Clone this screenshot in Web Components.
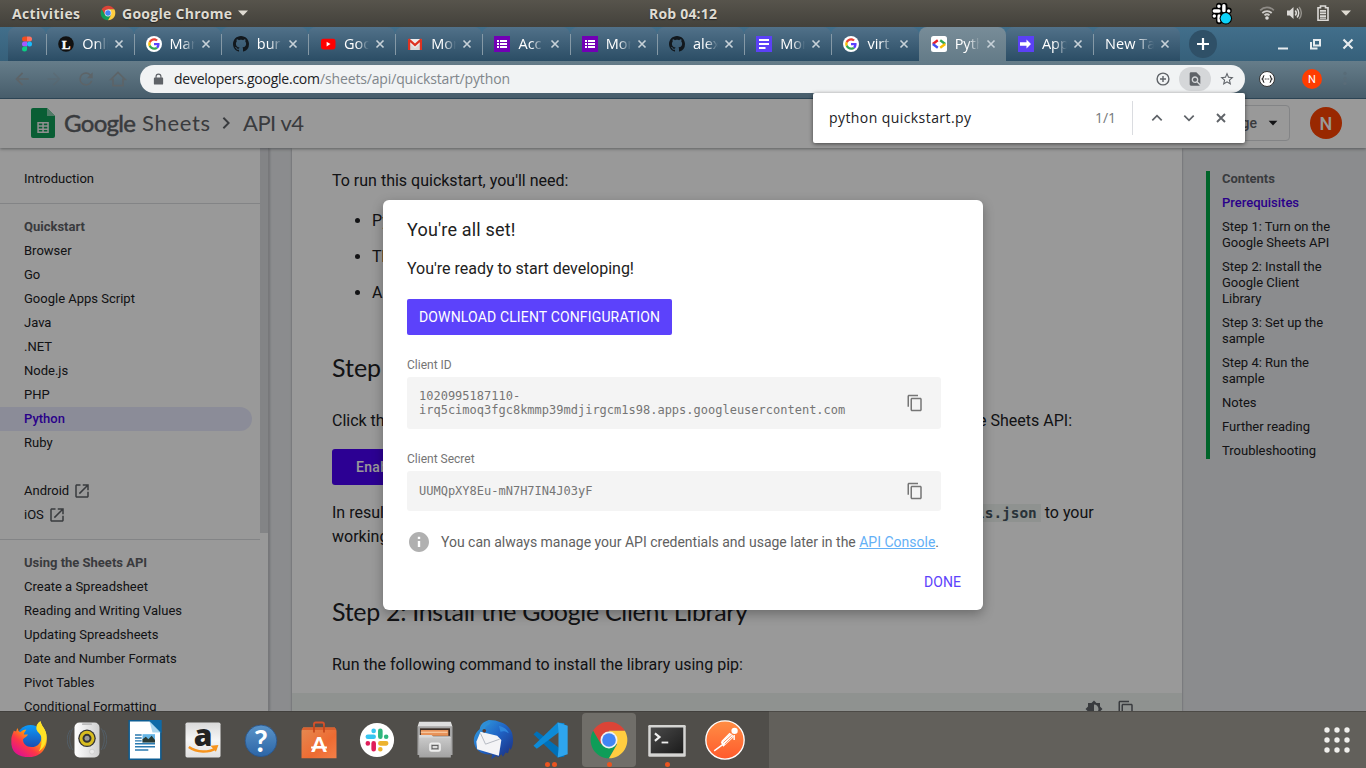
<!DOCTYPE html>
<html lang="en">
<head>
<meta charset="utf-8">
<title>Python Quickstart | Sheets API | Google Developers</title>
<style>
html,body{margin:0;height:100%;overflow:hidden}
body{width:1366px;height:768px;font-family:Roboto,sans-serif;background:#999}
</style>
</head>
<body>
<desk-top></desk-top>
<script>
const CHROME = '<path fill="#db4437" d="M4.95 13A22 22 0 0 1 43.05 13L24 13 14.47 29.5z"/><path fill="#0f9d58" d="M4.95 13L14.47 29.5 33.53 29.5 24 46A22 22 0 0 1 4.95 13z"/><path fill="#ffcd40" d="M43.05 13H24l9.53 16.5L24 46A22 22 0 0 0 43.05 13z"/><circle cx="24" cy="24" r="10.2" fill="#f1f1f1"/><circle cx="24" cy="24" r="8.2" fill="#4285f4"/>';
const FORMS = '<path fill="#7200b5" d="M0 0h16v16H0z"/><path fill="#fff" d="M3 4h2v2H3zM6 4h7v2H6zM3 7h2v2H3zM6 7h7v2H6zM3 10h2v2H3zM6 10h7v2H6z"/>';
const COPY = '<path fill="currentColor" d="M16 1H4c-1.1 0-2 .9-2 2v14h2V3h12V1zm3 4H8c-1.1 0-2 .9-2 2v14c0 1.1.9 2 2 2h11c1.1 0 2-.9 2-2V7c0-1.1-.9-2-2-2zm0 16H8V7h11v14z"/>';
const ICONS = {
  chrome: [48, CHROME],
  figma: [16, '<path fill="#f24e1e" d="M5.5 .5H8v5H5.5a2.5 2.5 0 0 1 0-5z"/><path fill="#ff7262" d="M8 .5h2.5a2.5 2.5 0 0 1 0 5H8z"/><path fill="#a259ff" d="M5.5 5.5H8v5H5.5a2.5 2.5 0 0 1 0-5z"/><circle cx="10.5" cy="8" r="2.5" fill="#1abcfe"/><path fill="#0acf83" d="M5.5 10.5H8V13a2.5 2.5 0 1 1-2.5-2.5z"/>'],
  ell: [16, '<circle cx="8" cy="8" r="7.8" fill="#111"/><text x="8" y="12.6" text-anchor="middle" font-family="Liberation Serif" font-weight="700" font-size="13" fill="#fff" stroke="#fff" stroke-width=".4">L</text>'],
  google: [16, '<circle cx="8" cy="8" r="8" fill="#fff"/><g transform="translate(2.2 2.2) scale(.242)"><path fill="#ea4335" d="M24 9.5c3.54 0 6.71 1.22 9.21 3.6l6.85-6.85C35.9 2.38 30.47 0 24 0 14.62 0 6.51 5.38 2.56 13.22l7.98 6.19C12.43 13.72 17.74 9.5 24 9.5z"/><path fill="#5b41ff" d="M46.98 24.55c0-1.57-.15-3.09-.38-4.55H24v9.02h12.94c-.58 2.96-2.26 5.48-4.78 7.18l7.73 6c4.51-4.18 7.09-10.36 7.09-17.65z"/><path fill="#fbbc05" d="M10.53 28.59c-.48-1.45-.76-2.99-.76-4.59s.27-3.14.76-4.59l-7.98-6.19C.92 16.46 0 20.12 0 24c0 3.88.92 7.54 2.56 10.78l7.97-6.19z"/><path fill="#34a853" d="M24 48c6.48 0 11.93-2.13 15.89-5.81l-7.73-6c-2.15 1.45-4.92 2.3-8.16 2.3-6.26 0-11.57-4.22-13.47-9.91l-7.98 6.19C6.51 42.62 14.62 48 24 48z"/></g>'],
  github: [16, '<path fill="#12181d" d="M8 0C3.58 0 0 3.58 0 8c0 3.54 2.29 6.53 5.47 7.59.4.07.55-.17.55-.38 0-.19-.01-.82-.01-1.49-2.01.37-2.53-.49-2.69-.94-.09-.23-.48-.94-.82-1.13-.28-.15-.68-.52-.01-.53.63-.01 1.08.58 1.23.82.72 1.21 1.87.87 2.33.66.07-.52.28-.87.51-1.07-1.78-.2-3.64-.89-3.64-3.95 0-.87.31-1.59.82-2.15-.08-.2-.36-1.02.08-2.12 0 0 .67-.21 2.2.82.64-.18 1.32-.27 2-.27.68 0 1.36.09 2 .27 1.53-1.04 2.2-.82 2.2-.82.44 1.1.16 1.92.08 2.12.51.56.82 1.27.82 2.15 0 3.07-1.87 3.75-3.65 3.95.29.25.54.73.54 1.48 0 1.07-.01 1.93-.01 2.2 0 .21.15.46.55.38A8.013 8.013 0 0 0 16 8c0-4.42-3.58-8-8-8z"/>'],
  youtube: [16, '<rect x="1" y="2.7" width="14.5" height="10.8" rx="2.4" fill="#f00"/><path fill="#fff" d="M6.6 5.8v4.6L10.5 8.1z"/>'],
  gmail: [16, '<path fill="#eee" d="M1 3h14v11H1z"/><path fill="#d8d8d8" d="M3 8l5 4 5-4v6H3z"/><path fill="#dd3322" d="M1 14V3.2L2.4 2.6 8 7.6l5.6-5L15 3.2V14h-2.2V6.3L8 10.4 3.2 6.3V14z"/>'],
  forms: [16, FORMS],
  docs: [16, '<path fill="#5b41f6" d="M0 0h16v16H0z"/><path fill="#fff" d="M3 3h10v2H3zM3 7h10v2H3zM3 11h6.5v2H3z"/>'],
  devs: [16, '<rect width="16" height="16" rx="2.5" fill="#fff"/><g fill="none" stroke-width="2.4"><path stroke="#e8202a" d="M6.8 4.3L1.8 8"/><path stroke="#4450f0" d="M1.8 8L6.8 11.7"/><path stroke="#34a853" d="M9.2 4.3L14.2 8"/><path stroke="#fbbc05" d="M14.2 8L9.2 11.7"/></g>'],
  apps: [16, '<path fill="#5b41f6" d="M0 0h16v16H0z"/><path fill="#fff" d="M2 6.3h6.5V3.5L13 8l-4.500 4.500V9.700H2z"/>'],
  close: [16, '<path d="M4 4l8 8M12 4l-8 8" stroke="currentColor" stroke-width="1.9" fill="none"/>'],
  back: [24, '<path fill="currentColor" d="M20 11H7.83l5.59-5.59L12 4l-8 8 8 8 1.41-1.41L7.83 13H20v-2z"/>'],
  forward: [24, '<path fill="currentColor" d="M12 4l-1.41 1.41L16.17 11H4v2h12.17l-5.58 5.59L12 20l8-8z"/>'],
  reload: [24, '<path fill="currentColor" d="M17.65 6.35A7.958 7.958 0 0 0 12 4a8 8 0 1 0 7.73 10h-2.08A6 6 0 1 1 12 6c1.66 0 3.14.69 4.22 1.78L13 11h7V4l-2.35 2.35z"/>'],
  home: [24, '<path fill="none" stroke="currentColor" stroke-width="2" d="M3.5 12.5L12 4l8.5 8.5H18V20H6v-7.5z"/>'],
  lock: [16, '<path fill="#5f6368" fill-rule="evenodd" d="M12.5 5.5h-.8V4.3a3.7 3.7 0 0 0-7.4 0v1.2h-.8A1.2 1.2 0 0 0 2.3 6.7v6.5c0 .6.5 1.1 1.2 1.1h9c.7 0 1.2-.5 1.2-1.1V6.700c0-.7-.5-1.200-1.200-1.200zM5.700 4.300a2.300 2.300 0 0 1 4.600 0v1.200H5.700z"/>'],
  plusc: [16, '<circle cx="8" cy="8" r="5.9" fill="none" stroke="#5f6368" stroke-width="1.4"/><path d="M8 5v6M5 8h6" stroke="#5f6368" stroke-width="1.4"/>'],
  findpage: [24, '<path fill="#5f6368" d="M20 19.59V8l-6-6H6c-1.1 0-1.99.9-1.99 2L4 20c0 1.1.89 2 1.99 2H18c.45 0 .85-.15 1.19-.4l-4.43-4.43c-.8.52-1.74.83-2.76.83-2.76 0-5-2.24-5-5s2.24-5 5-5 5 2.24 5 5c0 1.02-.31 1.96-.83 2.75L20 19.59zM9 13c0 1.66 1.34 3 3 3s3-1.34 3-3-1.34-3-3-3-3 1.34-3 3z"/>'],
  star: [24, '<path fill="#5f6368" d="M22 9.24l-7.19-.62L12 2 9.19 8.63 2 9.24l5.46 4.73L5.82 21 12 17.27 18.18 21l-1.63-7.03L22 9.24zM12 15.4l-3.76 2.27 1-4.28-3.32-2.88 4.38-.38L12 6.1l1.71 4.04 4.38.38-3.32 2.88 1 4.28L12 15.4z"/>'],
  braces: [16, '<circle cx="8" cy="8" r="7.5" fill="#fff" stroke="#333" stroke-width="1"/><path fill="none" stroke="#222" stroke-width="1.2" d="M5.3 4.5c-1.3 0-.8 3-2 3.5 1.2.5.7 3.5 2 3.5M10.7 4.5c1.3 0 .8 3 2 3.5-1.2.5-.7 3.5-2 3.5"/><path d="M5.8 7.500h1v1h-1zM7.500 7.500h1v1h-1zM9.200 7.500h1v1h-1z" fill="#222"/>'],
  up: [16, '<path d="M3.300 10.300L8 5.600l4.700 4.700" stroke="#5f6368" stroke-width="1.7" fill="none"/>'],
  down: [16, '<path d="M3.300 5.700L8 10.400l4.700-4.700" stroke="#5f6368" stroke-width="1.7" fill="none"/>'],
  min: [16, '<path d="M3 11.500h10v2H3z" fill="#e7ecef"/>'],
  restore: [16, '<path fill="none" stroke="#e7ecef" stroke-width="2" d="M7 4h6v5.500H7zM4 6v6.500h6.500"/>'],
  tray: [24, '<g stroke="#000" stroke-width="6.4" stroke-linecap="round"><path d="M9.500 4v5M15 4v5M5 9h14.500M5 14.500h4M9.500 15v5"/></g><g stroke="#fff" stroke-width="3.6" stroke-linecap="round" fill="none"><path d="M9.300 4.300v.1M14.500 4v5M4.500 9.300h4.800M19.500 9.300v.1M4.500 14.500v.1M9.500 14.500v5"/></g><circle cx="16.500" cy="17" r="6.500" fill="#000"/><circle cx="16.500" cy="17" r="5.400" fill="#0cd3fa"/>'],
  wifi: [16, '<g fill="none" stroke-width="1.8"><path stroke="#8e8b86" d="M1.200 5.300C5 1.500 11 1.500 14.800 5.300"/><path stroke="#cfcdca" d="M3.300 8C6 5.400 10 5.400 12.700 8M5.500 10.400c1.400-1.300 3.600-1.300 5 0"/></g><circle cx="8" cy="13" r="1.8" fill="#dcdad7"/>'],
  sound: [16, '<path fill="#dcdad7" d="M1 5.500h2.800L7.500 2v12L3.800 10.500H1z"/><path fill="none" stroke="#dcdad7" stroke-width="1.5" d="M9.300 5.500c1.200 1.500 1.200 3.500 0 5M11 3.600c2.300 2.500 2.300 6.300 0 8.800"/><path fill="none" stroke="#94918b" stroke-width="1.4" d="M13 2c3.100 3.500 3.100 8.500 0 12"/>'],
  battery: [16, '<path fill="none" stroke="#dcdad7" stroke-width="1.6" d="M5.500 2.800V1h5v1.800H13V15.200H3V2.800z"/><path fill="#dcdad7" d="M5 5h6v1.700H5zM5 7.600h6v1.700H5zM5 10.200h6v1.700H5zM5 12.600h6v1.200H5z"/>'],
  caret: [16, '<path fill="currentColor" d="M3 5.500h10L8 10.800z"/>'],
  sheets: [30, '<path fill="#0f9d58" d="M6 0h14l8 8v20a2 2 0 0 1-2 2H6a2 2 0 0 1-2-2V2a2 2 0 0 1 2-2z"/><path fill="#87ceac" d="M20 0l8 8h-8z"/><path fill="#f1f1f1" fill-rule="evenodd" d="M10.300 14h11.500v11H10.300zM11.800 15.500v1.800h3.500v-1.800zm5 0v1.800h3.500v-1.800zm-5 3.200v1.800h3.500v-1.800zm5 0v1.800h3.500v-1.800zm-5 3.200v1.700h3.500v-1.700zm5 0v1.700h3.500v-1.700z"/>'],
  chevron: [16, '<path d="M5 2l6 6-6 6" stroke="#5f6368" stroke-width="2.2" fill="none"/>'],
  external: [24, '<path fill="#5f6368" d="M19 19H5V5h5V3H5c-1.11 0-2 .9-2 2v14c0 1.1.89 2 2 2h14c1.1 0 2-.9 2-2v-6h-2v6zM13 3v2h4.59l-9.83 9.83 1.41 1.41L19 6.41V11h2V3h-8z"/>'],
  copy: [24, COPY],
  bright: [24, '<path fill="#5f6368" d="M20 15.31L23.31 12 20 8.69V4h-4.69L12 .69 8.69 4H4v4.69L.69 12 4 15.31V20h4.69L12 23.31 15.31 20H20v-4.690zM12 18V6c3.310 0 6 2.690 6 6s-2.690 6-6 6z"/>'],
  info: [24, '<path fill="#b0b0b0" d="M12 2C6.48 2 2 6.48 2 12s4.48 10 10 10 10-4.48 10-10S17.52 2 12 2zm1.2 15h-2.400v-6h2.400v6zm0-8h-2.400V6.700h2.400V9z"/>'],
  firefox: [48, '<defs><linearGradient id="f" x1=".8" y1=".1" x2=".2" y2=".9"><stop offset="0" stop-color="#fff44f"/><stop offset=".4" stop-color="#ff980e"/><stop offset=".7" stop-color="#ff3647"/><stop offset="1" stop-color="#e31587"/></linearGradient><linearGradient id="g" x1="0" y1="0" x2="0" y2="1"><stop offset="0" stop-color="#0a9bfb"/><stop offset="1" stop-color="#233a9d"/></linearGradient></defs><g transform="translate(.8 .5)"><circle cx="25" cy="22" r="16.5" fill="url(#g)"/><path fill="url(#f)" d="M10 9c0 4 1 4 3 5 2-2 5-3 7-3-1 2-3 4-3 6h5c-1 3-5 4-6 6 0 5 4 9 10 9 8 0 13-6 12-14-1-5-5-6-5-10 0-4 2-6 4-7 1 6 6 9 7 16 3 15-6 27-20 27S1 38 2 24C2 18 4 16 5 12c1 1 2 1 3 1 0-2 1-3 2-4z"/><path fill="#ffe226" d="M37 1c1 6 6 9 7 16 1 9-3 17-9 20 3-5 4-11 3-17-1-5-6-6-6-11 0-4 2-6 5-8z"/></g>'],
  rhythm: [48, '<defs><linearGradient id="r" x1="0" y1="0" x2="1" y2="0"><stop offset="0" stop-color="#fff"/><stop offset="1" stop-color="#cfcfcf"/></linearGradient></defs><g fill="none" stroke="#53616d" stroke-width="1"><path d="M7 10c-5 8-5 18 0 26M41 10c5 8 5 18 0 26M4 12c-5 7-5 16 0 23M44 12c5 7 5 16 0 23"/></g><rect x="9" y="3" width="30" height="42" rx="6" fill="url(#r)"/><circle cx="24" cy="22" r="10.500" fill="#333"/><circle cx="24" cy="22" r="7.200" fill="none" stroke="#d8bd20" stroke-width="3.600"/><circle cx="24" cy="22" r="3" fill="#999"/><rect x="18" y="4" width="12" height="2" rx="1" fill="#bbb"/><circle cx="30" cy="38" r="3" fill="#e9e9e9" stroke="#ccc"/>'],
  writer: [48, '<path fill="#fff" stroke="#0d5c91" stroke-width="1.8" d="M5 1h25l13 13v33H5z"/><path fill="#0d6aa8" d="M29 0h15v15z"/><path fill="#2d9bd8" d="M29 0l15 15H33z" opacity=".4"/><path stroke="#2a7ab0" stroke-width="1.7" d="M12 18h8M12 21.500h8M12 25h8M12 28.500h24M12 32h24M12 36h16"/><path fill="#64b5e6" d="M21 17h15v10H21z"/><path fill="#2b3a33" d="M21 27v-4l4-3 3 3 4-4 4 5v3z"/>'],
  amazon: [48, '<defs><linearGradient id="a" x1="0" y1="0" x2="0" y2="1"><stop offset="0" stop-color="#d9d9d9"/><stop offset=".5" stop-color="#f6f6f6"/><stop offset="1" stop-color="#e0e0e0"/></linearGradient></defs><rect x="3" y="3" width="42" height="42" rx="2" fill="url(#a)"/><text x="24" y="31" text-anchor="middle" font-family="Open Sans" font-weight="800" font-size="36" fill="#222">a</text><path fill="none" stroke="#f7941d" stroke-width="3" d="M7 32.500c10 7 24 7 33 1"/><path fill="#f7941d" d="M33 31l9.500-1-3 8z"/>'],
  help: [48, '<defs><linearGradient id="h" x1="0" y1="0" x2="0" y2="1"><stop offset="0" stop-color="#5a94c9"/><stop offset="1" stop-color="#2c65a6"/></linearGradient></defs><circle cx="24" cy="25" r="19" fill="url(#h)" stroke="#29568c" stroke-width="1"/><text x="24" y="38" text-anchor="middle" font-family="Lato" font-weight="700" font-size="36" fill="#fff">?</text>'],
  software: [48, '<defs><linearGradient id="s" x1="0" y1="0" x2="1" y2="1"><stop offset="0" stop-color="#e58a52"/><stop offset=".6" stop-color="#ee6b32"/><stop offset="1" stop-color="#f38048"/></linearGradient></defs><path fill="none" stroke="#d4512b" stroke-width="2.2" d="M18 14V5a2 2 0 0 1 2-2h8a2 2 0 0 1 2 2v9"/><path fill="url(#s)" d="M5 9h38l2 4v33H3V13z"/><path fill="#d9602f" d="M5 9h38l2 3H3z"/><path fill="none" stroke="#c24319" stroke-width="2" d="M18 15V7M30 15V7"/><text x="24" y="38.500" text-anchor="middle" font-family="Lato" font-weight="900" font-size="26" fill="#fff">A</text><path stroke="#fff" stroke-width="2.4" d="M14.500 33h19"/>'],
  slack: [48, '<circle cx="24" cy="24" r="20.500" fill="#fff"/><g stroke-width="5.500" stroke-linecap="round"><path stroke="#36c5f0" d="M13 20h7"/><path stroke="#36c5f0" d="M20 13v.1"/><path stroke="#2eb67d" d="M28 20v-7M35 20v.1"/><path stroke="#ecb22e" d="M28 28h7M28 35v.1"/><path stroke="#e01e5a" d="M20 28v7M13 28v.1"/></g>'],
  files: [48, '<defs><linearGradient id="c" x1="0" y1="0" x2="0" y2="1"><stop offset="0" stop-color="#c9c9c9"/><stop offset="1" stop-color="#a2a2a2"/></linearGradient></defs><path fill="#dedede" d="M5 2h38l2 6H3z"/><path fill="#a5a5a5" d="M3 8h42v34H3z"/><path fill="#3a2c25" d="M6 10h36v9H6z"/><path fill="#e8935a" d="M7 12h33v7H7z"/><path fill="#f8c9a0" d="M7 14h32v1.500H7z"/><path fill="#d9d9d9" d="M5 18h15l2 2h21v2H5z"/><path fill="url(#c)" d="M5 21h38v24H5z"/><rect x="18" y="28" width="12" height="9" rx="2" fill="#bbb" stroke="#eee" stroke-width="2"/><rect x="20.500" y="30.500" width="7" height="4" fill="#ddd" stroke="#555"/>'],
  thunder: [48, '<defs><linearGradient id="t" x1="0" y1="0" x2="1" y2="1"><stop offset="0" stop-color="#35a7e4"/><stop offset=".5" stop-color="#1f62c4"/><stop offset="1" stop-color="#1b2a79"/></linearGradient></defs><g transform="translate(1 0)"><path fill="url(#t)" d="M18 0c6 0 10 1 15 3 6 2 11 7 13 13 2 9 1 15-2 20l-1-3-2 7-3-1-3 5-2-3-4 4-2-2-6 4 1-6C12 43 0 37 0 25c0-6 3-11 7-14 1-6 5-9 11-11z"/><path fill="#2f8fd4" d="M8 12c3-6 7-9 12-10l-1 3c-4 1-6 4-7 9z"/><path fill="#2f86dc" d="M30 7c5 1 10 4 12 9-4-3-7-3-10-2z"/><path fill="#f4f4f6" d="M3 26l5-12 20 5 5 5-3 19-26-8z"/><path fill="none" stroke="#aaaeb8" stroke-width="1" d="M8 16l6 13 17-6"/><circle cx="12.500" cy="13" r="2.200" fill="#5a3b30"/></g>'],
  vscode: [48, '<path fill="#0070b8" d="M3 17l4-3.500L40 38v6L32 45z"/><path fill="#0d8bd8" d="M3 31l4 3.500L40 10V4l-8-1z"/><path fill="#2ea5ee" d="M32 3l12 4v34l-12 4 1-10V13z"/>'],
  terminal: [48, '<defs><linearGradient id="e" x1="0" y1="0" x2="1" y2="1"><stop offset="0" stop-color="#4a4a4a"/><stop offset="1" stop-color="#1b1b1b"/></linearGradient></defs><rect x="1.500" y="6" width="45" height="38" rx="1.500" fill="#d5d5d3"/><rect x="4.500" y="9" width="39" height="31" fill="url(#e)"/><path fill="none" stroke="#eee" stroke-width="2.6" d="M9.500 16l5.500 4.500L9.500 25"/><path stroke="#eee" stroke-width="2.2" d="M17.500 27h8"/>'],
  postman: [48, '<defs><linearGradient id="p" x1="0" y1="0" x2="0" y2="1"><stop offset="0" stop-color="#ff8e45"/><stop offset="1" stop-color="#ff5a2c"/></linearGradient></defs><circle cx="24" cy="24" r="23" fill="url(#p)" stroke="#fff" stroke-width="1.6"/><circle cx="35.500" cy="13" r="3.800" fill="#fff"/><path fill="#fff" d="M31 16l4 4-13 12-3-5z"/><path fill="none" stroke="#fff" stroke-width="1.7" d="M22 29L11 37M20 26l10-10M35 18v6"/><path stroke="#ff7a3c" stroke-width="1" d="M22 27l10-9M24 29l9-9"/>']
};
function element(name, css, html, setup) {
  customElements.define(name, class extends HTMLElement {
    connectedCallback() {
      if (this.shadowRoot) return;
      const root = this.attachShadow({ mode: 'open' });
      root.innerHTML = `<style>*{box-sizing:border-box}${css}</style>` + (typeof html === 'function' ? html(this) : html);
      if (setup) setup(this, root);
    }
  });
}
const a = (el, n, d = '') => el.getAttribute(n) ?? d;

element('ui-icon', ':host{display:inline-block;flex:none;line-height:0}svg{display:block}', el => {
  const [box, body] = ICONS[a(el, 'name')], s = a(el, 'size', 16);
  return `<svg width="${s}" height="${s}" viewBox="0 0 ${box} ${box}">${body}</svg>`;
});

element('top-panel', `
:host{display:grid;grid-template-columns:1fr auto 1fr;align-items:center;height:27px;padding-bottom:1px;background:linear-gradient(#57544c,#43413b);color:#dfdbd2;font:700 14px "Open Sans",sans-serif;text-shadow:0 1px 1px #222;box-sizing:border-box}
.l,.r{display:flex;align-items:center}.l{padding-left:12px}.r{justify-content:flex-end;padding-right:12px}
.app{margin:0 6px 0 20px}
.tray{margin-right:26px}.w{margin-right:11px}.s{margin-right:13px}.b{margin-right:7px}`, `
<div class="l"><fit-text w="68">Activities</fit-text><ui-icon class="app" name="chrome"></ui-icon><fit-text w="110">Google Chrome</fit-text><ui-icon name="caret" style="margin-left:3px"></ui-icon></div>
<fit-text w="68">Rob 04:12</fit-text>
<div class="r"><ui-icon class="tray" name="tray" size="23"></ui-icon><ui-icon class="w" name="wifi"></ui-icon><ui-icon class="s" name="sound"></ui-icon><ui-icon class="b" name="battery"></ui-icon><ui-icon name="caret"></ui-icon></div>`);

element('browser-tab', `
:host{box-sizing:border-box;display:flex;align-items:center;width:87.24px;height:34px;flex:none;padding:0 8px 1px 12px;border-radius:8px 8px 0 0;background:linear-gradient(#517189,#2b4d65);color:#fff;font:14.5px "Open Sans",sans-serif;position:relative}
:host([sep])::before{content:"";position:absolute;left:0;top:7px;width:1px;height:21px;background:#8599a6}
:host([active]){background:linear-gradient(#788c98,#647b88)}
:host([narrow]){width:38.3px;padding:0 11px 1px}
.t{flex:1;overflow:hidden;white-space:nowrap;margin-left:8px;-webkit-mask:linear-gradient(90deg,#000 50%,transparent)}
:host([plain]) .t{margin-left:0;-webkit-mask:linear-gradient(90deg,#000 62%,transparent)}
.x{color:#c7d1d8;margin-left:4px}`, el => `
${a(el, 'icon') ? `<ui-icon name="${a(el, 'icon')}"></ui-icon>` : ''}
${el.hasAttribute('narrow') ? '' : `<span class="t"><slot></slot></span><ui-icon class="x" name="close" size="14"></ui-icon>`}`);

element('tab-strip', `
:host{display:flex;height:34px;box-sizing:border-box;background:linear-gradient(#426f8b,#36607a);padding-left:8px;align-items:stretch}
.new{display:grid;place-items:center;width:28px;height:28px;border-radius:50%;background:#2f5067;margin:3px 0 0 9px;color:#fff}
.gap{flex:1}.win{display:flex;align-items:center;gap:16px;padding-right:9px;padding-bottom:1px;color:#e7ecef}`, `
<browser-tab narrow icon="figma"></browser-tab>
<browser-tab sep icon="ell">Onli</browser-tab><browser-tab sep icon="google">Mar</browser-tab><browser-tab sep icon="github">bur</browser-tab>
<browser-tab sep icon="youtube">Goo</browser-tab><browser-tab sep icon="gmail">Mon</browser-tab><browser-tab sep icon="forms">Acc</browser-tab>
<browser-tab sep icon="forms">Mon</browser-tab><browser-tab sep icon="github">alex</browser-tab><browser-tab sep icon="docs">Mon</browser-tab>
<browser-tab sep icon="google">virt</browser-tab><browser-tab active icon="devs">Pyth</browser-tab><browser-tab icon="apps">App</browser-tab>
<browser-tab sep plain>New Tab</browser-tab>
<div class="new"><svg width="12" height="12"><path d="M6 0v12M0 6h12" stroke="#fff" stroke-width="2.2"/></svg></div>
<div class="gap"></div>
<div class="win"><ui-icon name="min"></ui-icon><ui-icon name="restore"></ui-icon><ui-icon name="close" size="18"></ui-icon></div>`);

element('find-bar', `
:host{box-sizing:border-box;position:absolute;top:32px;right:121px;z-index:5;display:flex;align-items:center;width:432px;height:50px;padding-left:16px;background:#fff;border-radius:2px;box-shadow:0 1px 4px rgba(0,0,0,.55);font:14px "Open Sans",sans-serif;color:#202124}
fit-text{margin-bottom:2px}
.n{color:#75787c;margin-left:auto}.d{width:1px;height:34px;background:#dadce0;margin:0 16px}
.b{display:flex;gap:16px;padding-right:16px;color:#5f6368}`, `
<fit-text w="142">python quickstart.py</fit-text><fit-text class="n" w="21">1/1</fit-text><span class="d"></span>
<span class="b"><ui-icon name="up"></ui-icon><ui-icon name="down"></ui-icon><ui-icon name="close"></ui-icon></span>`);

element('tool-bar', `
:host{box-sizing:border-box;display:flex;align-items:center;height:38px;position:relative;background:linear-gradient(#667d8a,#475d6b);border-bottom:1px solid #2c4454;color:#5d6468;padding-bottom:1px;font-family:"Open Sans",sans-serif}
.nav{display:flex;gap:12px;padding-left:12px;width:140px}.nav ui-icon:nth-child(2){opacity:.35}
.url{display:flex;align-items:center;width:1105px;height:28px;border-radius:14px;background:#f1f3f4;padding:0 10px;font-size:14px;color:#202124}
.url fit-text{margin-bottom:1px}.url fit-text:first-of-type{margin-left:9px}.p{color:#80868b}
.f{display:grid;place-items:center;width:32px;height:24px;border-radius:12px;background:#d5d7d9;margin:0 8px}
.av{width:20px;height:20px;border-radius:50%;background:#ff3d00;color:#fff;display:grid;place-items:center;font:11px Roboto;margin:0 0 0 26px}
.dots{margin-left:21px}`, `
<div class="nav"><ui-icon name="back" size="20"></ui-icon><ui-icon name="forward" size="20"></ui-icon><ui-icon name="reload" size="20"></ui-icon><ui-icon name="home" size="20"></ui-icon></div>
<div class="url"><ui-icon name="lock" size="13" style="margin-left:2px"></ui-icon><fit-text w="146">developers.google.com</fit-text><fit-text class="p" w="190">/sheets/api/quickstart/python</fit-text><span style="flex:1"></span><ui-icon name="plusc"></ui-icon><span class="f"><ui-icon name="findpage"></ui-icon></span><ui-icon name="star"></ui-icon></div>
<ui-icon name="braces" style="margin-left:14px"></ui-icon><span class="av" style="margin-left:27px">N</span>
<svg class="dots" width="4" height="16" fill="#596c78"><circle cx="2" cy="2.500" r="1.700"/><circle cx="2" cy="7.500" r="1.700"/><circle cx="2" cy="12.500" r="1.700"/></svg>
<find-bar></find-bar>`);

element('docs-header', `
:host{box-sizing:border-box;display:flex;align-items:center;height:49px;padding:0 24px 1px 27px;background:#fff;position:relative;z-index:1;box-shadow:0 1px 3px rgba(60,64,67,.5);color:#5f6368;font:22px Lato,sans-serif}
fit-text{margin-bottom:2px}
.g{margin-left:7px;font-size:24px;-webkit-text-stroke:.5px #5f6368}
.lang{margin-left:auto;display:flex;align-items:center;justify-content:flex-end;height:36px;width:112px;border:1px solid #dadce0;border-radius:4px;padding-right:9px;font:500 14px Roboto;color:#5f6368}
.av{width:32px;height:32px;border-radius:50%;background:#ff4400;color:#fff;display:grid;place-items:center;font:500 18px Roboto;margin-left:20px}`, `
<ui-icon name="sheets" size="30"></ui-icon><fit-text class="g" w="72">Google</fit-text><fit-text w="68" style="margin-left:6px">Sheets</fit-text>
<ui-icon name="chevron" size="14" style="margin:0 10px 0 9px"></ui-icon><fit-text w="61">API v4</fit-text>
<span class="lang">Language<ui-icon name="caret" size="14" style="margin-left:9px;color:#202124"></ui-icon></span><span class="av">N</span>`);

element('nav-item', `
:host{box-sizing:border-box;display:flex;align-items:center;height:24px;padding:0 0 2px 24px;width:252px;font:13px Roboto;color:#202124;white-space:nowrap}
:host([head]){font-weight:700;color:#5f6368}
:host([current]){font-weight:500;color:#4700e6;background:#e8eafe;border-radius:0 12px 12px 0}
ui-icon{margin:2px 0 0 4px}`, el => `<slot></slot>${el.hasAttribute('ext') ? '<ui-icon name="external" size="18"></ui-icon>' : ''}`);

element('side-nav', `
:host{box-sizing:border-box;display:block;width:269px;flex:none;height:563px;overflow:hidden;background:linear-gradient(#dadce0,#dadce0) 260px -8px/8px 393px no-repeat,#fff;border-right:1px solid #c6c8cb;padding-top:19px;box-shadow:1px 0 2px rgba(60,64,67,.25)}
hr{border:0;height:1px;background:#dadce0;width:260px;margin:12px 0 11px}.sp{height:24px}`, `
<nav-item>Introduction</nav-item><hr>
<nav-item head>Quickstart</nav-item>${['Browser', 'Go', 'Google Apps Script', 'Java', '.NET', 'Node.js', 'PHP'].map(t => `<nav-item>${t}</nav-item>`).join('')}
<nav-item current>Python</nav-item><nav-item>Ruby</nav-item><div class="sp"></div>
<nav-item ext>Android</nav-item><nav-item ext>iOS</nav-item><hr>
<nav-item head>Using the Sheets API</nav-item>${['Create a Spreadsheet', 'Reading and Writing Values', 'Updating Spreadsheets', 'Date and Number Formats', 'Pivot Tables', 'Conditional Formatting'].map(t => `<nav-item>${t}</nav-item>`).join('')}`);

element('doc-article', `
:host{box-sizing:border-box;display:block;width:890px;margin:0 0 0 23px;height:563px;overflow:hidden;background:#fff;padding:21px 40px 0;font:16px/24px Roboto;color:#202124;box-shadow:0 1px 2px rgba(60,64,67,.5)}
p{margin:0 0 16px}ul{margin:0 0 48px;padding-left:40px}li{margin-bottom:12px}li:last-child{margin:0}
h2{margin:0 0 24px;height:32px;font:25px/28px Lato,sans-serif}
.btn{display:flex;align-items:center;width:240px;height:36px;margin-bottom:16px;padding:0 0 1px 24px;border-radius:3px;background:#4a00f5;color:#fff;font:500 14px Roboto;letter-spacing:.3px}
code{font:700 14.4px/20px "DejaVu Sans Mono",monospace;color:#455560;background:#eef3f1;padding:1px 4px}
.code{margin:0 -40px;height:40px;background:#eef3f1;display:flex;justify-content:flex-end;gap:14px;padding:7px 47px;color:#5f6368}`, `
<p>To run this quickstart, you'll need:</p>
<ul><li>Python 2.6 or greater</li><li>The pip package management tool</li><li>A Google account</li></ul>
<h2>Step 1: Turn on the Google Sheets API</h2>
<p><fit-text w="740">Click this button to create a new Cloud Platform project and automatically enable the Google Sheets API:</fit-text></p>
<div class="btn">Enable the Google Sheets API</div>
<p style="white-space:nowrap;margin-bottom:48px">In resulting dialog click <b style="font-weight:500">DOWNLOAD CLIENT CONFIGURATION</b> and save the file <code>credentials.json</code> to your<br>working directory.</p>
<h2><fit-text w="416">Step 2: Install the Google Client Library</fit-text></h2>
<p>Run the following command to install the library using pip:</p>
<div class="code"><ui-icon name="bright" size="18"></ui-icon><ui-icon name="copy" size="18"></ui-icon></div>`);

element('toc-list', `
:host{box-sizing:border-box;display:flex;flex-direction:column;gap:8px;width:136px;height:288px;margin:23px 0 0 24px;padding-left:12px;border-left:4px solid #00a746;font:13px/16px Roboto;color:#202124;white-space:nowrap}
b{color:#5f6368}.c{color:#4700e6;font-weight:500}`, `
<b>Contents</b><span class="c">Prerequisites</span><span>Step 1: Turn on the<br>Google Sheets API</span><span>Step 2: Install the<br>Google Client<br>Library</span><span>Step 3: Set up the<br>sample</span><span>Step 4: Run the<br>sample</span><span>Notes</span><span>Further reading</span><span>Troubleshooting</span>`);

element('copy-field', `
:host{display:block;width:534px;margin-top:22px;font:12px/16px Roboto;color:#757575}
.box{display:flex;align-items:center;justify-content:space-between;margin-top:4px;padding:0 17px 0 12px;height:var(--h,40px);background:#f4f4f4;border-radius:3px;font:12px/14px "DejaVu Sans Mono",monospace}`, el => `
<div>${a(el, 'label')}</div><div class="box"><span><slot></slot></span><ui-icon name="copy" size="18"></ui-icon></div>`);

element('setup-dialog', `
:host{box-sizing:border-box;display:flex;flex-direction:column;align-items:flex-start;width:600px;height:410px;border-radius:6px;background:#fff;padding:18px 22px 18px 24px;box-shadow:0 4px 12px rgba(0,0,0,.3);color:#212121;font:16px/24px Roboto}
.t{font-size:18px;margin-bottom:15px}.r{margin-bottom:18px}
.btn{display:flex;align-items:center;justify-content:center;width:265px;height:36px;border-radius:2px;background:#5c42fb;color:#fff;font:14px Roboto}
.i{display:flex;align-items:center;height:20px;margin:21px 0 20px;font:14px/20px Roboto;color:#616161;white-space:nowrap}
.i ui-icon{margin:0 10px 1px 0}u{color:#64b0f6}
.d{align-self:flex-end;font:14px/20px Roboto;color:#5c42fb}`, `
<fit-text class="t" w="108.5">You're all set!</fit-text><fit-text class="r" w="227">You're ready to start developing!</fit-text>
<div class="btn"><fit-text w="241">DOWNLOAD CLIENT CONFIGURATION</fit-text></div>
<copy-field label="Client ID" style="--h:52px">1020995187110-<br>irq5cimoq3fgc8kmmp39mdjirgcm1s98.apps.googleusercontent.com</copy-field>
<copy-field label="Client Secret">UUMQpXY8Eu-mN7H7IN4J03yF</copy-field>
<div class="i"><ui-icon name="info" size="24"></ui-icon><fit-text w="498">You can always manage your API credentials and usage later in the <u>API Console</u>.</fit-text></div>
<fit-text class="d" w="37">DONE</fit-text>`);

element('docs-page', `
:host{display:block;height:612px;position:relative;background:#e8eaed;overflow:hidden}
.row{display:flex;align-items:flex-start}
.scrim{position:absolute;inset:0;z-index:3;display:grid;place-items:center;background:rgba(0,0,0,.4)}`, `
<docs-header></docs-header><div class="row"><side-nav></side-nav><doc-article></doc-article><toc-list></toc-list></div>
<div class="scrim"><setup-dialog></setup-dialog></div>`);

element('dock-item', `
:host{display:grid;place-items:center;width:58px;height:57px;position:relative}
.tile{display:grid;place-items:center;width:54px;height:54px;border-radius:4px}
:host([active]) .tile{background:#706e69}
.dots{position:absolute;bottom:1px;left:0;right:0;display:flex;gap:2px;justify-content:center}
i{width:5px;height:5px;border-radius:50%;background:#e95420}`, el => `
<span class="tile"><ui-icon name="${a(el, 'icon')}" size="${a(el, 'size', 40)}"></ui-icon></span><span class="dots">${'<i></i>'.repeat(+a(el, 'dots', 0))}</span>`);

element('app-dock', `
:host{display:flex;justify-content:space-between;align-items:center;height:57px;background:#62605b;box-shadow:inset 0 1px #4c4a46}
.l{display:flex;width:769px;height:57px;background:#504e4a;box-shadow:inset 0 1px #42403d}
svg{margin-right:15px}`, `
<div class="l"><dock-item icon="firefox"></dock-item><dock-item icon="rhythm"></dock-item><dock-item icon="writer"></dock-item><dock-item icon="amazon"></dock-item><dock-item icon="help"></dock-item><dock-item icon="software"></dock-item><dock-item icon="slack"></dock-item><dock-item icon="files"></dock-item><dock-item icon="thunder"></dock-item><dock-item icon="vscode" dots="2"></dock-item><dock-item icon="chrome" active dots="1"></dock-item><dock-item icon="terminal" dots="1"></dock-item><dock-item icon="postman"></dock-item></div>
<svg width="28" height="28" fill="#f0efec">${[4, 14, 24].map(y => [4, 14, 24].map(x => `<circle cx="${x}" cy="${y}" r="2.7"/>`).join('')).join('')}</svg>`);

element('desk-top', ':host{display:flex;flex-direction:column;width:1366px;height:768px;overflow:hidden}', `
<top-panel></top-panel><tab-strip></tab-strip><tool-bar style="z-index:5"></tool-bar><docs-page></docs-page><app-dock></app-dock>`);

/* Spreads its text over the width given in "w" by adjusting the letter spacing. */
element('fit-text', ':host{display:inline-block;white-space:nowrap;flex:none}span{display:inline-block}', '<span><slot></slot></span>', (el, root) => {
  const span = root.querySelector('span'), w = +a(el, 'w');
  const natural = span.getBoundingClientRect().width;
  span.style.letterSpacing = (w - natural) / (el.textContent.length - 1) + 'px';
  el.style.width = w + 'px';
});
</script>
</body>
</html>
